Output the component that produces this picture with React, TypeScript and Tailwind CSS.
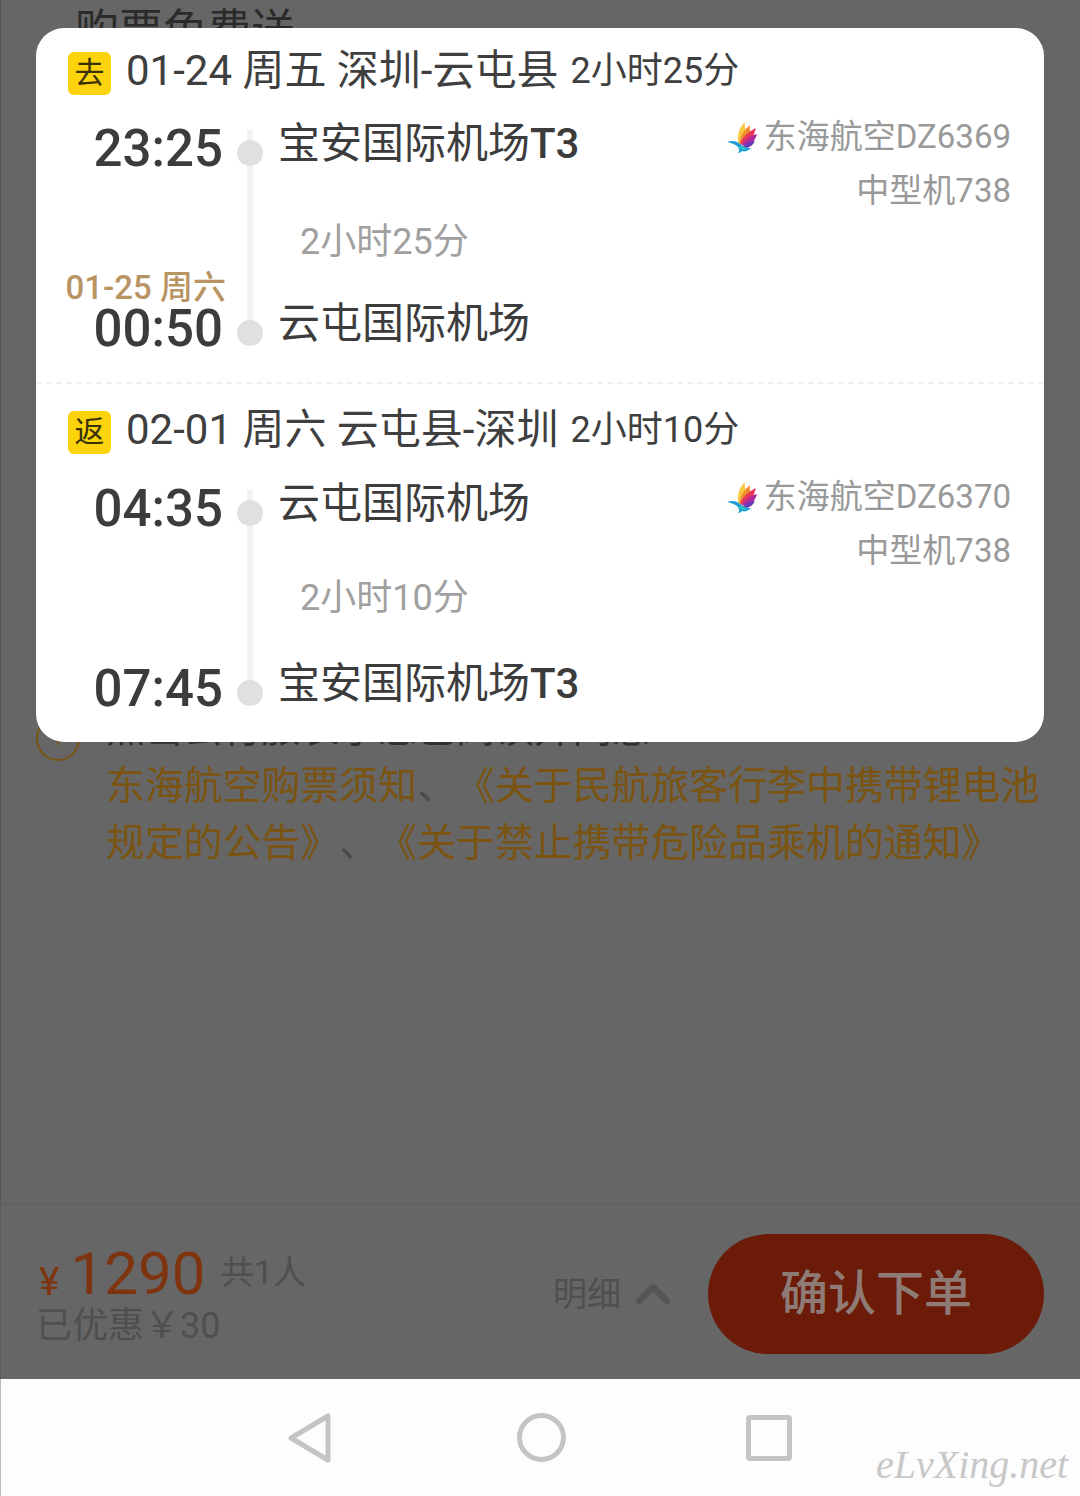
import { ChevronUp } from 'lucide-react';

const font = { fontFamily: 'Roboto, "Noto Sans CJK SC", sans-serif' };

function AirlineLogo() {
  return (
    <svg viewBox="0 0 32 34" className="h-[34px] w-[32px] shrink-0">
      <path d="M13 25C10 16 13 8 19 2C18 6 20 9 20 13Z" fill="#f7c842" />
      <path d="M14 25C13 17 18 10 24 5C23 9 25 11 24 16Z" fill="#f28a30" />
      <path d="M14 25C15 18 22 12 30 8C28 13 28 16 26 19Z" fill="#e8385a" />
      <path d="M15 26C18 20 24 16 31 14C30 18 28 21 26 23Z" fill="#b02c9c" />
      <path d="M16 27C20 23 25 21 29 21C27 25 24 27 21 28Z" fill="#6a3bb8" />
      <path d="M1 22C6 20 11 21 14 24L18 27C21 28 23 28 25 28C22 31 19 32 16 31C15 32 14 33 12 33C14 31 13 28 11 26C9 24 5 23 1 22Z" fill="#1f9bd6" />
      <path d="M12 27C15 25 18 26 21 29C18 31 14 30 12 27Z" fill="#27c0c8" />
    </svg>
  );
}

type Place = { time: string; airport: string; terminal?: string; nextDay?: string };

type Leg = {
  tag: string;
  title: string;
  duration: string;
  from: Place;
  to: Place;
  airline: string;
  plane: string;
  bodyTop: string;
  midTop: string;
};

const legs: Leg[] = [
  {
    tag: '去',
    title: '01-24 周五 深圳-云屯县',
    duration: '2小时25分',
    from: { time: '23:25', airport: '宝安国际机场', terminal: 'T3' },
    to: { time: '00:50', airport: '云屯国际机场', nextDay: '01-25 周六' },
    airline: '东海航空DZ6369',
    plane: '中型机738',
    bodyTop: 'mt-[26px]',
    midTop: 'pt-[41px]',
  },
  {
    tag: '返',
    title: '02-01 周六 云屯县-深圳',
    duration: '2小时10分',
    from: { time: '04:35', airport: '云屯国际机场' },
    to: { time: '07:45', airport: '宝安国际机场', terminal: 'T3' },
    airline: '东海航空DZ6370',
    plane: '中型机738',
    bodyTop: 'mt-[27px]',
    midTop: 'pt-[37px]',
  },
];

function Point({ place }: { place: Place }) {
  return (
    <div className="flex h-[60px] items-center">
      <div className="w-[187px] text-right text-[51px] leading-[60px] font-medium text-[#3c3c3c]">{place.time}</div>
      <div className="flex w-[54px] justify-center pt-[8px]">
        <div className="relative z-10 h-[26px] w-[26px] rounded-full bg-[#e0e0e0]" />
      </div>
      <div className="relative -top-[5px] ml-[1px] text-[42px] leading-[60px] whitespace-nowrap text-[#3c3c3c]">
        {place.airport}
        {place.terminal && <span className="font-medium">{place.terminal}</span>}
      </div>
    </div>
  );
}

function LegBlock({ leg }: { leg: Leg }) {
  return (
    <div>
      <div className="flex h-[44px] items-center pl-[32px]">
        <div className="mt-[4px] flex h-[43px] w-[43px] items-center justify-center rounded-[6px] bg-[#fdd30c] text-[30px] leading-none text-[#3a3206]">
          {leg.tag}
        </div>
        <span className="ml-[15px] text-[42px] leading-[44px] whitespace-nowrap text-[#3f3f3f]">{leg.title}</span>
        <span className="ml-[12px] text-[36px] leading-[44px] whitespace-nowrap text-[#3f3f3f]">{leg.duration}</span>
      </div>
      <div className={`relative ${leg.bodyTop}`}>
        {/* line joining the two points */}
        <div className="absolute top-[11px] left-[211px] h-[200px] w-[6px] bg-[#f2f2f2]" />
        <div className="absolute top-[-9px] right-[33px] flex flex-col items-end text-[#999999]">
          <div className="flex h-[54px] items-center gap-[6px] text-[33px] whitespace-nowrap">
            <AirlineLogo />
            {leg.airline}
          </div>
          <div className="h-[54px] text-[33px] leading-[54px] whitespace-nowrap">{leg.plane}</div>
        </div>
        <Point place={leg.from} />
        <div className={`relative h-[120px] pl-[264px] text-[36px] leading-[44px] text-[#a0a0a0] ${leg.midTop}`}>
          {leg.duration}
          {leg.to.nextDay && (
            <div className="absolute right-[818px] bottom-[-9px] text-[33px] leading-[40px] font-medium whitespace-nowrap text-[#b89464]">
              {leg.to.nextDay}
            </div>
          )}
        </div>
        <Point place={leg.to} />
      </div>
    </div>
  );
}

export default function App() {
  return (
    <div className="relative flex h-[1496px] w-[1080px] flex-col overflow-hidden" style={font}>
      <div className="flex-1 border-l border-[#555555] bg-[#666666] pt-[6px]">
        <div className="pl-[74px] text-[44px] leading-[50px] text-[#2b2b2b]">购票免费送</div>
        <div className="mt-[672px] flex pl-[35px]">
          <div className="mt-[-11px] flex h-[44px] w-[44px] shrink-0 items-center justify-center rounded-full border-2 border-[#7a5410]">
            <div className="h-[12px] w-[2px] bg-[#7a5410]" />
          </div>
          <div className="ml-[26px] w-[950px] text-[38.9px] leading-[57px] whitespace-nowrap text-[#7a5410] [text-spacing-trim:space-all]">
            <div className="mt-[-28px] text-[#2f2f2f]">点击云行旅表示您已阅读并同意</div>
            <div>
              东海航空购票须知<span className="text-[#4a4a4a]">、</span>《关于民航旅客行李中携带锂电池
            </div>
            <div>
              规定的公告》<span className="text-[#4a4a4a]">、</span>《关于禁止携带危险品乘机的通知》
            </div>
          </div>
        </div>
      </div>

      <div className="flex h-[175px] items-center border-t border-l border-[#5c5c5c] bg-[#666666] pt-[4px] pr-[36px] pl-[35px]">
        <div className="w-[517px]">
          <div className="flex h-[64px] items-center pt-[2px]">
            <span className="mt-[16px] ml-[3px] text-[39px] leading-none text-[#7f3410]">¥</span>
            <span className="ml-[11px] text-[60px] leading-[64px] text-[#7f3410]">1290</span>
            <span className="mt-[-2px] ml-[15px] text-[33.5px] leading-none text-[#4f4f4f]">共1人</span>
          </div>
          <div className="text-[36px] leading-[42px] text-[#4f4f4f]">已优惠￥30</div>
        </div>
        <div className="flex items-center text-[34px] text-[#4f4f4f]">
          明细
          <ChevronUp className="ml-[4px] h-[56px] w-[56px] text-[#555555]" strokeWidth={2.6} />
        </div>
        <div className="ml-auto flex h-[120px] w-[336px] items-center justify-center rounded-full bg-[#6b1b08] text-[48px] font-medium text-[#8f7b75]">
          确认下单
        </div>
      </div>

      <div className="relative flex h-[117px] items-center justify-center gap-[180px] border-l border-[#bbbbbb] bg-[#fdfdfd] pr-[2px]">
        <svg viewBox="0 0 46 52" className="mr-[4px] h-[52px] w-[46px]">
          <path d="M41 4V48L4 26Z" fill="none" stroke="#c4c4c4" strokeWidth="5" strokeLinejoin="round" />
        </svg>
        <div className="h-[49px] w-[49px] rounded-full border-[5px] border-[#c4c4c4]" />
        <div className="h-[46px] w-[46px] rounded-[4px] border-[5px] border-[#c4c4c4]" />
        <div
          className="absolute top-[86px] left-[875px] -translate-y-1/2 text-[40px] leading-none whitespace-nowrap text-[#c8c8c8] italic"
          style={{ fontFamily: '"Liberation Serif", serif' }}
        >
          eLvXing.net
        </div>
      </div>

      {/* flight detail popup */}
      <div className="absolute top-[28px] left-[36px] h-[714px] w-[1008px] rounded-[28px] bg-white pt-[21px]">
        <LegBlock leg={legs[0]} />
        <div className="mt-[23px] mb-[24px] border-t-2 border-dashed border-[#efefef]" />
        <LegBlock leg={legs[1]} />
      </div>
    </div>
  );
}
